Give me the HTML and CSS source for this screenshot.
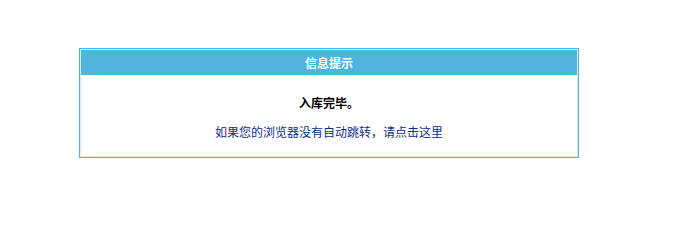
FILE: index.html
```html
<!DOCTYPE html>
<html lang="zh-CN">
<head>
<meta charset="utf-8">
<title>信息提示</title>
<link rel="stylesheet" href="styles.css">
</head>
<body>
<div class="msg-box">
  <div class="msg-inner">
    <div class="msg-title">信息提示</div>
    <div class="msg-body">
      <p class="msg-text">入库完毕。</p>
      <p class="msg-link"><a href="#">如果您的浏览器没有自动跳转，请点击这里</a></p>
    </div>
  </div>
</div>
</body>
</html>
```

FILE: styles.css
```css
html, body {
  margin: 0;
  padding: 0;
  background: #ffffff;
}
body {
  font-family: "Noto Sans CJK SC", "Liberation Sans", sans-serif;
  font-size: 12px;
  padding-top: 48px;
}
.msg-box {
  box-sizing: border-box;
  width: 500px;
  margin-left: 79px;
  border: 1px solid #4fb4de;
}
.msg-inner {
  border: 1px solid #d2ecf8;
}
.msg-title {
  height: 25px;
  line-height: 25px;
  background: #50b4de;
  color: #ffffff;
  font-weight: bold;
  text-align: center;
}
.msg-body {
  padding: 18px 0 14px;
  text-align: center;
}
.msg-text {
  margin: 0;
  line-height: 20px;
  font-weight: bold;
  color: #000000;
}
.msg-link {
  margin: 9px 0 0;
  line-height: 20px;
}
.msg-link a {
  color: #0a2e8c;
  text-decoration: none;
}
```
